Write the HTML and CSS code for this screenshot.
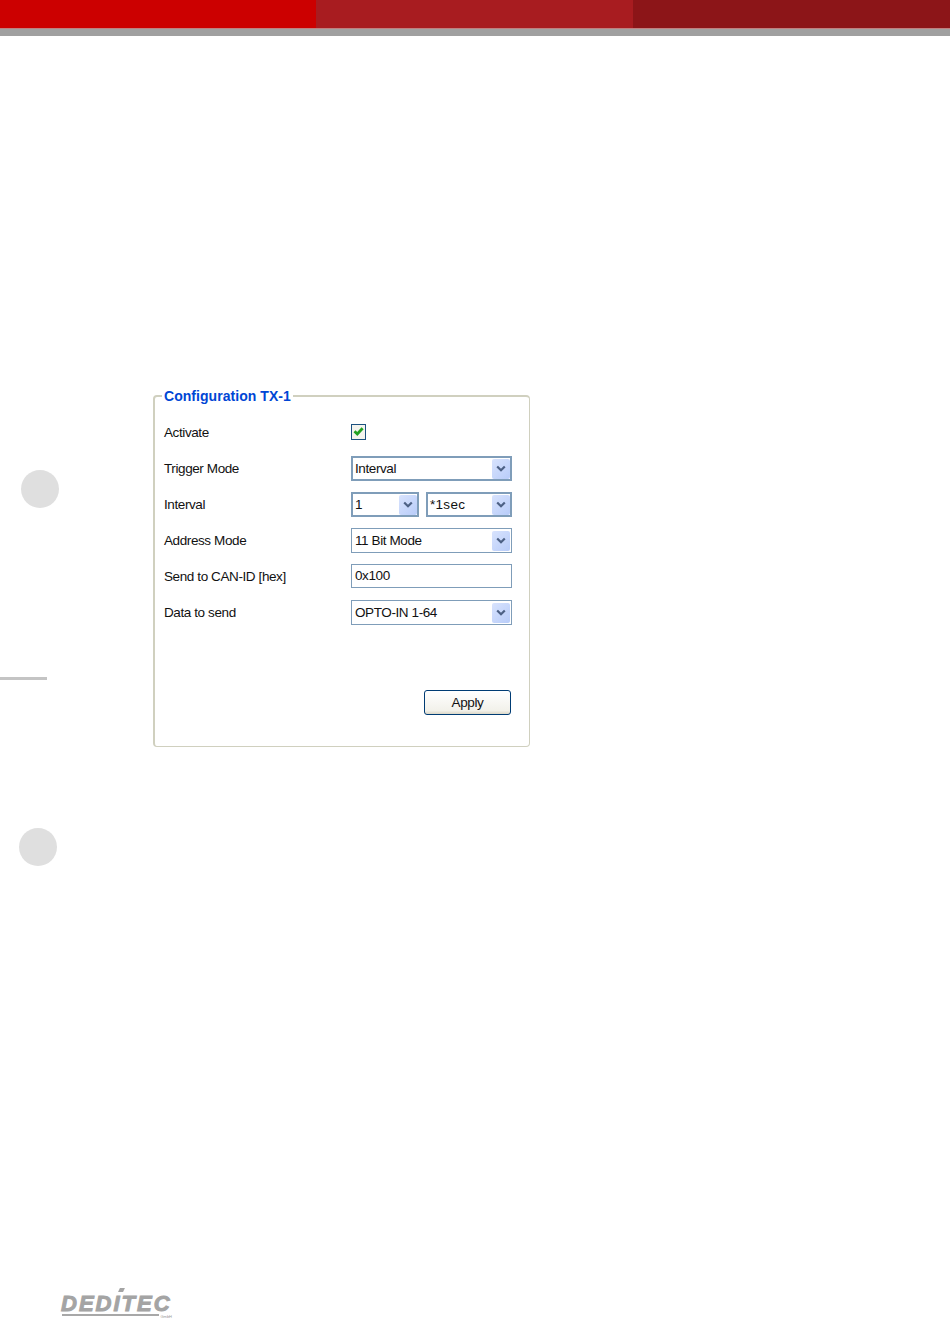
FILE: index.html
```html
<!DOCTYPE html>
<html lang="en">
<head>
<meta charset="utf-8">
<title>Configuration TX-1</title>
<link rel="stylesheet" href="styles.css">
</head>
<body>
<header class="top">
  <div class="bands">
    <div class="band band-a"></div>
    <div class="band band-b"></div>
    <div class="band band-c"></div>
  </div>
  <div class="top-rule"></div>
</header>

<div class="dot dot-1"></div>
<div class="margin-rule"></div>
<div class="dot dot-2"></div>

<main class="main">
  <fieldset class="panel">
    <legend class="legend">Configuration TX-1</legend>
    <div class="rows">
      <div class="row">
        <span class="label">Activate</span>
        <span class="check">
          <svg width="11" height="11" viewBox="0 0 11 11"><path d="M1.5 5.2 L4.3 8 L9.6 2.3" fill="none" stroke="#21a121" stroke-width="2.8"/></svg>
        </span>
      </div>
      <div class="row">
        <span class="label">Trigger Mode</span>
        <div class="combo combo-full"><span class="value">Interval</span><span class="arrow"><svg width="10" height="8" viewBox="0 0 10 8"><path d="M1.2 1.5 L5 5.3 L8.8 1.5" fill="none" stroke="#4d6185" stroke-width="2.2"/></svg></span></div>
      </div>
      <div class="row">
        <span class="label">Interval</span>
        <div class="pair">
          <div class="combo combo-small"><span class="value">1</span><span class="arrow"><svg width="10" height="8" viewBox="0 0 10 8"><path d="M1.2 1.5 L5 5.3 L8.8 1.5" fill="none" stroke="#4d6185" stroke-width="2.2"/></svg></span></div>
          <div class="combo combo-unit"><span class="value value-wide">*1sec</span><span class="arrow"><svg width="10" height="8" viewBox="0 0 10 8"><path d="M1.2 1.5 L5 5.3 L8.8 1.5" fill="none" stroke="#4d6185" stroke-width="2.2"/></svg></span></div>
        </div>
      </div>
      <div class="row">
        <span class="label">Address Mode</span>
        <div class="combo combo-full combo-thin"><span class="value">11 Bit Mode</span><span class="arrow"><svg width="10" height="8" viewBox="0 0 10 8"><path d="M1.2 1.5 L5 5.3 L8.8 1.5" fill="none" stroke="#4d6185" stroke-width="2.2"/></svg></span></div>
      </div>
      <div class="row">
        <span class="label">Send to CAN-ID [hex]</span>
        <div class="field"><span class="value">0x100</span></div>
      </div>
      <div class="row">
        <span class="label">Data to send</span>
        <div class="combo combo-full combo-thin"><span class="value">OPTO-IN 1-64</span><span class="arrow"><svg width="10" height="8" viewBox="0 0 10 8"><path d="M1.2 1.5 L5 5.3 L8.8 1.5" fill="none" stroke="#4d6185" stroke-width="2.2"/></svg></span></div>
      </div>
    </div>
    <div class="actions">
      <button class="apply" type="button">Apply</button>
    </div>
  </fieldset>
</main>

<footer class="footer">
  <div class="logo">
    <span class="logo-word">DEDITEC</span>
    <span class="logo-rule"></span>
    <span class="logo-tick"></span>
    <span class="logo-gmbh">GmbH</span>
  </div>
</footer>
</body>
</html>
```

FILE: styles.css
```css
html, body {
  margin: 0;
  padding: 0;
  background: #fff;
}

body {
  position: relative;
  width: 950px;
  height: 1344px;
  overflow: hidden;
  font-family: "Liberation Sans", Arial, sans-serif;
  font-size: 13.5px;
  letter-spacing: -0.4px;
  color: #111;
}

.bands {
  display: flex;
  height: 28px;
}

.band-a { width: 316px; background: #cc0000; }
.band-b { width: 317px; background: #a81c20; }
.band-c { flex: 1; background: #8c1518; }

.top-rule {
  height: 7px;
  border-top: 1px solid #c08080;
  background: #a0a0a0;
}

.dot {
  position: absolute;
  width: 38px;
  height: 38px;
  border-radius: 50%;
  background: #dfdfdf;
}

.dot-1 { left: 21px; top: 470px; }
.dot-2 { left: 19px; top: 828px; }

.margin-rule {
  position: absolute;
  left: 0;
  top: 677px;
  width: 47px;
  height: 3px;
  background: #c4c4c4;
}

.main {
  padding: 352px 0 0 153px;
}

.panel {
  box-sizing: border-box;
  width: 377px;
  height: 359px;
  margin: 0;
  padding: 0 17px 0 9px;
  border-style: solid;
  border-color: #d0d0bf;
  border-width: 2px 1px 1px 2px;
  border-radius: 4px;
}

.legend {
  margin-left: -2px;
  padding: 0 2px;
  color: #0046d5;
  font-size: 14px;
  font-weight: bold;
  line-height: 16px;
  letter-spacing: 0.05px;
}

.rows {
  display: flex;
  flex-direction: column;
  gap: 11px;
  margin-top: 16px;
}

.row {
  display: flex;
  align-items: center;
  height: 25px;
}

.label {
  width: 187px;
  flex: none;
}

.check {
  box-sizing: border-box;
  display: flex;
  align-items: center;
  justify-content: center;
  width: 15px;
  height: 16px;
  margin-bottom: 2px;
  background: #f4f4ee;
  border: 1px solid #1c5180;
}

.combo {
  box-sizing: border-box;
  display: flex;
  flex: none;
  align-items: center;
  justify-content: space-between;
  height: 25px;
  background: #fff;
  border: 2px solid #7f9db9;
}

.combo-full { width: 161px; }
.combo-small { width: 68px; }
.combo-unit { width: 86px; }

.combo-thin { border-width: 1px; padding-right: 1px; }

.pair {
  display: flex;
  flex: none;
  gap: 7px;
}

.value {
  padding-left: 2px;
  white-space: nowrap;
}

.value-wide { letter-spacing: 0.3px; }

.combo-thin .value { padding-left: 3px; }

.arrow {
  display: flex;
  align-items: center;
  justify-content: center;
  width: 18px;
  height: 20px;
  border-radius: 2px;
  background: linear-gradient(135deg, #d8e3fd, #b8ccf9);
}

.field {
  box-sizing: border-box;
  display: flex;
  flex: none;
  align-items: center;
  width: 161px;
  height: 24px;
  margin-bottom: 2px;
  border: 1px solid #7f9db9;
}

.field .value { padding-left: 3px; }

.actions {
  display: flex;
  justify-content: flex-end;
  margin-top: 65px;
  padding-right: 1px;
}

.apply {
  box-sizing: border-box;
  width: 87px;
  height: 25px;
  padding: 0;
  border: 1px solid #003c74;
  border-radius: 3px;
  background: linear-gradient(#ffffff, #f2f1ea 85%, #dcd8c8);
  font: 13.5px "Liberation Sans", Arial, sans-serif;
  letter-spacing: -0.4px;
  color: #111;
}

.footer {
  position: absolute;
  left: 61px;
  top: 1287px;
}

.logo {
  position: relative;
  width: 111px;
  height: 31px;
}

.logo-word {
  display: block;
  padding-top: 7px;
  font-size: 22px;
  line-height: 20px;
  font-weight: bold;
  font-style: italic;
  letter-spacing: 2px;
  color: #a4a4a4;
  -webkit-text-stroke: 1px #a4a4a4;
}

.logo-rule {
  display: block;
  width: 97px;
  height: 2px;
  margin-left: 1px;
  background: #a8a8a8;
}

.logo-tick {
  position: absolute;
  left: 58px;
  top: 1px;
  width: 5px;
  height: 4px;
  background: #a4a4a4;
  transform: skewX(-25deg);
}

.logo-gmbh {
  position: absolute;
  right: 0;
  top: 28px;
  font-size: 4px;
  line-height: 4px;
  letter-spacing: 0;
  color: #999;
}
```
